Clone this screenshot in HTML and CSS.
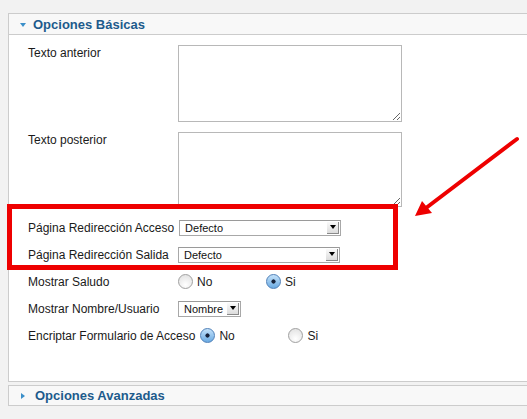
FILE: index.html
```html
<!DOCTYPE html>
<html lang="es">
<head>
  <meta charset="UTF-8">
  <title>Opciones del módulo</title>
  <meta name="viewport" content="width=device-width, initial-scale=1.0">
  <link rel="stylesheet" href="styles.css">
</head>
<body>
  <div class="panel">
    <div class="panel-head"><span class="tri-down"></span>Opciones Básicas</div>
    <div class="panel-body">
      <div class="row row-area">
        <label class="lbl">Texto anterior</label>
        <textarea class="area"></textarea>
      </div>
      <div class="row row-area">
        <label class="lbl">Texto posterior</label>
        <textarea class="area area-short"></textarea>
      </div>
      <div class="row">
        <label class="lbl">Página Redirección Acceso</label>
        <div class="sel"><span class="sel-text">Defecto</span><span class="sel-btn"></span></div>
      </div>
      <div class="row">
        <label class="lbl">Página Redirección Salida</label>
        <div class="sel"><span class="sel-text">Defecto</span><span class="sel-btn"></span></div>
      </div>
      <div class="row">
        <label class="lbl">Mostrar Saludo</label>
        <span class="opt"><span class="radio"></span>No</span>
        <span class="opt"><span class="radio on"></span>Si</span>
      </div>
      <div class="row">
        <label class="lbl">Mostrar Nombre/Usuario</label>
        <div class="sel sel-small"><span class="sel-text">Nombre</span><span class="sel-btn"></span></div>
      </div>
      <div class="row">
        <label class="lbl">Encriptar Formulario de Acceso</label>
        <span class="opt"><span class="radio on"></span>No</span>
        <span class="opt"><span class="radio"></span>Si</span>
      </div>
    </div>
  </div>
  <div class="panel panel-closed">
    <div class="panel-head"><span class="tri-right"></span>Opciones Avanzadas</div>
  </div>

  <!-- annotation drawn over the form -->
  <div class="mark-box"></div>
  <svg class="mark-arrow" width="527" height="419" viewBox="0 0 527 419">
    <line x1="517" y1="139" x2="426" y2="208" stroke="#ee0000" stroke-width="4" stroke-linecap="round"/>
    <polygon points="415,216 422,201 432,213" fill="#ee0000"/>
  </svg>
</body>
</html>
```

FILE: styles.css
```css
body { margin:0; background:#f2f2f2; font-family:'Liberation Sans',Arial,sans-serif; font-size:12px; color:#1a1a1a; }
.panel { margin:13px -4px 0 8px; border:1px solid #cccccc; background:#fff; }
.panel-closed { margin-top:3px; }
.panel-head { height:20px; background:#f8f8f8; border-bottom:1px solid #cccccc; display:flex; align-items:center; padding-left:11px; font-size:13px; font-weight:bold; color:#1d5b8c; }
.panel-closed .panel-head { height:19px; border-bottom:none; }
.tri-down { width:0; height:0; border-left:3.5px solid transparent; border-right:3.5px solid transparent; border-top:4px solid #3b8fc9; margin-right:7px; margin-top:1px; }
.tri-right { width:0; height:0; border-top:3.5px solid transparent; border-bottom:3.5px solid transparent; border-left:4px solid #3b8fc9; margin-right:10px; margin-left:1px; }
.panel-body { padding:10px 0 32px 19px; }
.row { display:flex; align-items:center; height:27px; }
.row-area { align-items:flex-start; height:auto; margin-bottom:10px; }
.row-area + .row-area { margin-bottom:7px; }
.lbl { min-width:150px; padding-right:5px; box-sizing:border-box; line-height:14px; }
.row-area .lbl { padding-top:1px; }
.area { width:224px; height:77px; box-sizing:border-box; border:1px solid #b8b8b8; margin:0; padding:2px; font-family:inherit; background:#fff; }
.area-short { height:75px; }
.sel { display:flex; align-items:center; width:162px; height:16px; box-sizing:border-box; border:1px solid #a8a8a8; border-top-color:#9a9a9a; background:#fff; font-size:11px; }
.sel-small { width:63px; }
.sel-text { flex:1; padding-left:5px; color:#111; }
.sel-btn { width:12px; height:12px; margin-right:1px; box-sizing:border-box; background:linear-gradient(#fafafa,#dcdcdc); border-right:1px solid #8a8a8a; border-bottom:1px solid #8a8a8a; display:flex; align-items:center; justify-content:center; }
.sel-btn::after { content:''; border-left:3.5px solid transparent; border-right:3.5px solid transparent; border-top:4px solid #000; }
.opt { display:inline-flex; align-items:center; width:88px; gap:4px; font-size:12px; }
.radio { width:13px; height:13px; border-radius:50%; border:1px solid #a0a0a0; background:radial-gradient(circle at 50% 75%, #ffffff, #dedede); }
.radio.on { border-color:#4f80b8; background:radial-gradient(circle, #16223a 0 1.8px, transparent 2.4px), linear-gradient(#c4e2fa, #6aaae2); }
.mark-box { position:absolute; left:7px; top:204px; width:381px; height:56px; border:5px solid #ee0000; }
.mark-arrow { position:absolute; left:0; top:0; pointer-events:none; }
```
